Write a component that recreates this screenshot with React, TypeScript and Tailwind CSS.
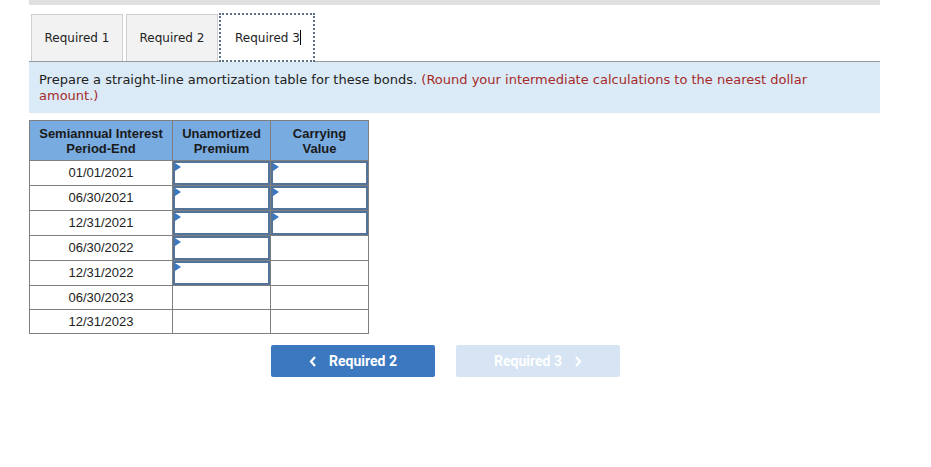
import React from "react";

const rows = [
  { d: "01/01/2021", a: true, b: true },
  { d: "06/30/2021", a: true, b: true },
  { d: "12/31/2021", a: true, b: true },
  { d: "06/30/2022", a: true, b: false },
  { d: "12/31/2022", a: true, b: false },
  { d: "06/30/2023", a: false, b: false },
  { d: "12/31/2023", a: false, b: false },
];

function InputCell({ on }: { on: boolean }) {
  return (
    <td className="border border-[#7f7f7f] p-0 h-[24px]">
      {on ? (
        <div className="relative h-[24px] border-2 border-[#53739a] bg-white">
          <div className="absolute left-0 top-0 w-0 h-0 border-t-[4px] border-b-[4px] border-l-[6px] border-t-transparent border-b-transparent border-l-[#3a78c2]" />
        </div>
      ) : null}
    </td>
  );
}

export default function App() {
  return (
    <div className="w-[931px] h-[467px] bg-white relative" style={{ fontFamily: '"DejaVu Sans", Verdana, sans-serif' }}>
      <div className="ml-[29px] w-[851px]">
        <div className="h-[5px] bg-[#e0e0e0]" />
        <div className="flex items-end mt-[8px] h-[48px] pl-[2px]">
          <div className="w-[92px] h-[47px] bg-[#f2f2f2] border border-[#cfcfcf] border-b-0 flex items-center justify-center text-[12px] text-[#222]">Required 1</div>
          <div className="w-[92px] h-[47px] ml-[3px] bg-[#f2f2f2] border border-[#cfcfcf] border-b-0 flex items-center justify-center text-[12px] text-[#222]">Required 2</div>
          <div className="w-[96px] h-[49px] ml-[1px] pl-[2px] bg-white border-2 border-dotted border-[#5a7189] flex items-center justify-center text-[12px] text-[#222] relative top-[1px]">
            <span>Required 3</span>
            <span className="inline-block w-[1px] h-[15px] bg-black ml-[0px]" />
          </div>
        </div>
        <div className="border-t border-[#9a9a9a] bg-[#dbeaf7] px-[10px] pt-[10px] pb-[9px] text-[13px] leading-[16px] text-[#222]">
          <span>Prepare a straight-line amortization table for these bonds. </span>
          <span className="text-[#a52a2a]">(Round your intermediate calculations to the nearest dollar</span>
          <br />
          <span className="text-[#a52a2a]">amount.)</span>
        </div>
        <table className="mt-[7px] border-collapse text-[13px]" style={{ fontFamily: '"Liberation Sans", Arial, sans-serif' }}>
          <thead>
            <tr className="bg-[#78abe0] text-[#1a1a1a] font-bold leading-[15px]">
              <th className="border border-[#7f7f7f] w-[143px] h-[40px] font-bold">Semiannual Interest<br />Period-End</th>
              <th className="border border-[#7f7f7f] w-[98px] font-bold">Unamortized<br />Premium</th>
              <th className="border border-[#7f7f7f] w-[98px] font-bold">Carrying<br />Value</th>
            </tr>
          </thead>
          <tbody>
            {rows.map((r) => (
              <tr key={r.d}>
                <td className="border border-[#7f7f7f] h-[24px] text-center text-[#222] p-0">{r.d}</td>
                <InputCell on={r.a} />
                <InputCell on={r.b} />
              </tr>
            ))}
          </tbody>
        </table>
        <div className="flex gap-[21px] mt-[11px] pl-[242px]" style={{ fontFamily: 'Roboto, "Liberation Sans", sans-serif' }}>
          <div className="w-[164px] h-[32px] bg-[#3b78c0] rounded-[2px] flex items-center justify-center gap-[12px] text-white font-bold text-[14px]">
            <svg width="8" height="11" viewBox="0 0 8 11"><path d="M6 1 L2 5.5 L6 10" stroke="white" strokeWidth="2.2" fill="none" /></svg>
            <span>Required 2</span>
          </div>
          <div className="w-[164px] h-[32px] bg-[#d6e4f3] rounded-[2px] flex items-center justify-center gap-[12px] text-white font-bold text-[14px]">
            <span>Required 3</span>
            <svg width="8" height="11" viewBox="0 0 8 11"><path d="M2 1 L6 5.5 L2 10" stroke="white" strokeWidth="2.2" fill="none" /></svg>
          </div>
        </div>
      </div>
    </div>
  );
}
